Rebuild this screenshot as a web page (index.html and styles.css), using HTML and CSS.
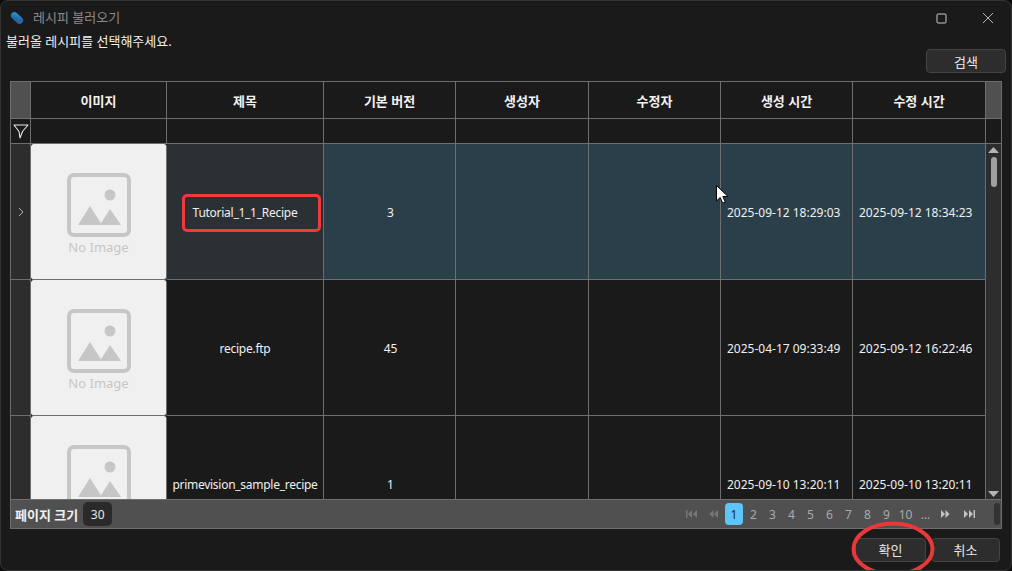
FILE: index.html
```html
<!DOCTYPE html>
<html lang="ko">
<head>
<meta charset="utf-8">
<title>레시피 불러오기</title>
<link rel="stylesheet" href="styles.css">
</head>
<body>
<div class="window">
  <header class="titlebar">
    <svg class="logo" width="14" height="14" viewBox="0 0 14 14"><defs><linearGradient id="lg" x1="0" y1="0" x2="1" y2="1"><stop offset="0" stop-color="#2f9bd8"/><stop offset=".6" stop-color="#1f6aa8"/><stop offset="1" stop-color="#5a4f9a"/></linearGradient></defs><rect x="0" y="3.5" width="14" height="7" rx="3.5" transform="rotate(42 7 7)" fill="url(#lg)"/></svg>
    <span class="title ko">레시피 불러오기</span>
    <div class="controls">
      <svg width="11" height="11" viewBox="0 0 11 11"><rect x="1" y="1" width="9" height="9" rx="1" fill="none" stroke="#c8c8c8"/></svg>
      <svg width="12" height="12" viewBox="0 0 12 12"><path d="M1 1l10 10M11 1L1 11" stroke="#b8b8b8" fill="none"/></svg>
    </div>
  </header>
  <p class="prompt ko">불러올 레시피를 선택해주세요.</p>
  <div class="toolbar"><button class="btn search ko">검색</button></div>

  <section class="table">
    <div class="row head ko">
      <div class="cell corner"></div>
      <div class="cell">이미지</div>
      <div class="cell">제목</div>
      <div class="cell">기본 버전</div>
      <div class="cell">생성자</div>
      <div class="cell">수정자</div>
      <div class="cell">생성 시간</div>
      <div class="cell">수정 시간</div>
      <div class="cell corner last"></div>
    </div>
    <div class="row filter">
      <div class="cell"><svg width="16" height="16" viewBox="0 0 16 16"><path d="M1 2h14l-5.500 6.500-2.500 6.500-1-6.500z" fill="none" stroke="#e8e8e8" stroke-width="1.100" stroke-linejoin="round"/></svg></div>
      <div class="cell"></div><div class="cell"></div><div class="cell"></div><div class="cell"></div><div class="cell"></div><div class="cell"></div><div class="cell"></div>
      <div class="cell last"></div>
    </div>
    <div class="body">
      <div class="rows">
        <div class="row data selected">
          <div class="cell rowhead"><svg width="6" height="10" viewBox="0 0 6 10"><path d="M1 1l4 4-4 4" fill="none" stroke="#b0b0b0"/></svg></div>
          <div class="cell thumb">
            <svg width="64" height="64" viewBox="0 0 64 64"><rect x="2" y="2" width="60" height="60" rx="5" fill="none" stroke="#c6c6c6" stroke-width="4"/><circle cx="43" cy="22" r="5.500" fill="#c6c6c6"/><path d="M11 52l12-19 12 19zM33 52l10-16 11 16z" fill="#c6c6c6"/></svg>
            <span class="noimg">No Image</span>
          </div>
          <div class="cell title-cell name">Tutorial_1_1_Recipe</div>
          <div class="cell ver">3</div><div class="cell"></div><div class="cell"></div>
          <div class="cell time">2025-09-12 18:29:03</div>
          <div class="cell time">2025-09-12 18:34:23</div>
        </div>
        <div class="row data">
          <div class="cell rowhead"></div>
          <div class="cell thumb">
            <svg width="64" height="64" viewBox="0 0 64 64"><rect x="2" y="2" width="60" height="60" rx="5" fill="none" stroke="#c6c6c6" stroke-width="4"/><circle cx="43" cy="22" r="5.500" fill="#c6c6c6"/><path d="M11 52l12-19 12 19zM33 52l10-16 11 16z" fill="#c6c6c6"/></svg>
            <span class="noimg">No Image</span>
          </div>
          <div class="cell name">recipe.ftp</div>
          <div class="cell ver">45</div><div class="cell"></div><div class="cell"></div>
          <div class="cell time">2025-04-17 09:33:49</div>
          <div class="cell time">2025-09-12 16:22:46</div>
        </div>
        <div class="row data">
          <div class="cell rowhead"></div>
          <div class="cell thumb">
            <svg width="64" height="64" viewBox="0 0 64 64"><rect x="2" y="2" width="60" height="60" rx="5" fill="none" stroke="#c6c6c6" stroke-width="4"/><circle cx="43" cy="22" r="5.500" fill="#c6c6c6"/><path d="M11 52l12-19 12 19zM33 52l10-16 11 16z" fill="#c6c6c6"/></svg>
            <span class="noimg"></span>
          </div>
          <div class="cell name">primevision_sample_recipe</div>
          <div class="cell ver">1</div><div class="cell"></div><div class="cell"></div>
          <div class="cell time">2025-09-10 13:20:11</div>
          <div class="cell time">2025-09-10 13:20:11</div>
        </div>
      </div>
      <aside class="scrollbar">
        <svg width="11" height="6" viewBox="0 0 11 6"><path d="M5.500 0l5.500 6H0z" fill="#b4b4b4"/></svg>
        <div class="thumbbar"></div>
        <svg class="down" width="11" height="6" viewBox="0 0 11 6"><path d="M0 0h11L5.500 6z" fill="#b4b4b4"/></svg>
      </aside>
    </div>
    <footer class="pagerbar">
      <span class="size-label ko">페이지 크기</span>
      <span class="size-select">30</span>
      <nav class="pager">
        <svg class="pg-icon first" width="11" height="8" viewBox="0 0 11 8"><path d="M0 0h1.500v8H0zM6 0v8L2 4zM11 0v8L7 4z" fill="#787878"/></svg>
        <svg class="pg-icon prev" width="9" height="8" viewBox="0 0 9 8"><path d="M4.500 0v8L.5 4zM9 0v8L5 4z" fill="#787878"/></svg>
        <span class="pg active">1</span><span class="pg">2</span><span class="pg">3</span><span class="pg">4</span><span class="pg">5</span><span class="pg">6</span><span class="pg">7</span><span class="pg">8</span><span class="pg">9</span><span class="pg">10</span><span class="pg dots">...</span>
        <svg class="pg-icon next" width="9" height="8" viewBox="0 0 9 8"><path d="M0 0v8l4-4zM4.500 0v8l4-4z" fill="#c4c4c4"/></svg>
        <svg class="pg-icon last-i" width="11" height="8" viewBox="0 0 11 8"><path d="M0 0v8l4-4zM5 0v8l4-4zM9.500 0H11v8H9.500z" fill="#c4c4c4"/></svg>
      </nav>
      <div class="hscroll"></div>
    </footer>
  </section>

  <div class="actions">
    <button class="btn ok ko">확인</button>
    <button class="btn cancel ko">취소</button>
  </div>

  <div class="mark-rect"></div>
  <svg class="mark-ellipse" width="90" height="60" viewBox="0 0 90 60"><ellipse cx="45" cy="28" rx="39.500" ry="25.500" fill="none" stroke="#e8383a" stroke-width="4"/></svg>
  <svg class="cursor" width="13" height="19" viewBox="0 0 13 19"><path d="M.5.500v15.500l3.700-3.500 2.500 5.700 2.600-1.100-2.500-5.600h5.200z" fill="#fff" stroke="#000"/></svg>
</div>
</body>
</html>
```
FILE: styles.css
```css
* { box-sizing: border-box; }
html, body { margin: 0; height: 100%; background: #0c0c0c; overflow: hidden; }
body { font: 12px "Noto Sans", "Noto Sans CJK KR", sans-serif; color: #f0f0f0; }
.ko { font-size: 13px; }

.window {
  position: relative;
  width: 1012px;
  height: 571px;
  background: #1a1a1a;
  border: 1px solid #343434;
  border-radius: 8px;
  overflow: hidden;
  display: flex;
  flex-direction: column;
  padding: 0 9px 0 9px;
}

.titlebar { height: 32px; flex: none; display: flex; align-items: center; margin: 0 -9px; padding: 2px 12px 0 9px; }
.logo { flex: none; }
.title { margin-left: 9px; margin-bottom: 2px; color: #8c8c8c; line-height: 16px; }
.controls { margin-left: auto; display: flex; align-items: center; gap: 35px; padding-right: 5px; }

.prompt { margin: 0 -4px; height: 16px; line-height: 16px; flex: none; color: #f0f0f0; }

.toolbar { height: 32px; flex: none; display: flex; justify-content: flex-end; align-items: flex-start; margin-right: -4px; }
.btn {
  font-family: inherit;
  color: #e8e8e8;
  background: #2d2d2d;
  border: 1px solid #444;
  border-radius: 4px;
  padding: 0;
}
.search { width: 80px; height: 24px; }

.table {
  flex: none;
  width: 992px;
  height: 448px;
  border: 1px solid #6e6e6e;
  display: flex;
  flex-direction: column;
  overflow: hidden;
}
.row { display: grid; grid-template-columns: 20px 136px 157px 132px 133px 132px 132px 133px 15px; flex: none; }
.cell {
  border-right: 1px solid #6e6e6e;
  border-bottom: 1px solid #6e6e6e;
  display: flex;
  align-items: center;
  justify-content: center;
  white-space: nowrap;
  min-width: 0;
  overflow: hidden;
}
.cell.last { border-right: 0; }
.head { height: 37px; font-weight: 700; color: #f2f2f2; }
.corner { background: #505050; }
.filter { height: 25px; }

.body { height: 355px; flex: none; display: flex; overflow: hidden; }
.rows { width: 975px; flex: none; }
.rows .row { grid-template-columns: 20px 136px 157px 132px 133px 132px 132px 133px; }
.data { height: 136px; }
.data .cell { padding-top: 2px; }
.data .ver { padding-left: 2px; }
.data .rowhead { padding-top: 0; }
.name { letter-spacing: -0.27px; }
.rowhead { background: #2d2d2d; }
.selected .cell { background: #2a3f4a; }
.selected .rowhead { background: #2d2d2d; }
.selected .title-cell { background: #2a3034; }
.selected .cell.thumb, .data .cell.thumb { background: #f0f0f0; flex-direction: column; border-radius: 3px; padding-top: 0; }
.thumb svg { margin-top: 5px; flex: none; }
.noimg { font-size: 13px; height: 18px; line-height: 18px; margin-top: 1px; color: #c6c6c6; flex: none; }
.data .time { justify-content: flex-start; padding-left: 6px; }

.scrollbar { flex: 1; background: #2d2d2d; display: flex; flex-direction: column; align-items: center; padding-top: 3px; }
.thumbbar { width: 6px; height: 30px; margin-top: 4px; border-radius: 3px; background: #a0a0a0; }
.scrollbar .down { margin-top: auto; margin-bottom: 2px; }

.pagerbar { flex: 1; background: #505050; border-top: 1px solid #6e6e6e; display: flex; align-items: center; padding-left: 4px; }
.size-label { font-weight: 700; color: #f0f0f0; }
.size-select { width: 29px; height: 24px; margin-left: 5px; background: #2a2a2a; border-radius: 5px; display: flex; align-items: center; justify-content: center; color: #e8e8e8; }
.pager { margin-left: auto; display: flex; align-items: center; color: #aaa; }
.pg { width: 19px; height: 22px; display: flex; align-items: center; justify-content: center; }
.pg.active { background: #5cc6f8; color: #1a2a33; border-radius: 4px; width: 18px; margin-right: 1px; }
.pg.dots { margin-left: 1px; }
.pg-icon { flex: none; }
.prev { margin-left: 12px; margin-right: 7px; }
.next { margin-left: 6px; }
.last-i { margin-left: 14px; margin-right: 18px; }
.hscroll { width: 6px; height: 22px; margin-right: 1px; margin-left: 1px; border-radius: 3px; background: #333; }

.actions { flex: 1; display: flex; justify-content: flex-end; align-items: center; gap: 5px; padding-right: 2px; }
.ok { width: 71px; height: 24px; }
.cancel { width: 69px; height: 24px; }

.mark-rect { position: absolute; left: 181px; top: 193px; width: 139px; height: 38px; border: 3px solid #ee3a3c; border-radius: 5px; }
.mark-ellipse { position: absolute; left: 847px; top: 520px; }
.cursor { position: absolute; left: 715px; top: 184px; }
```
